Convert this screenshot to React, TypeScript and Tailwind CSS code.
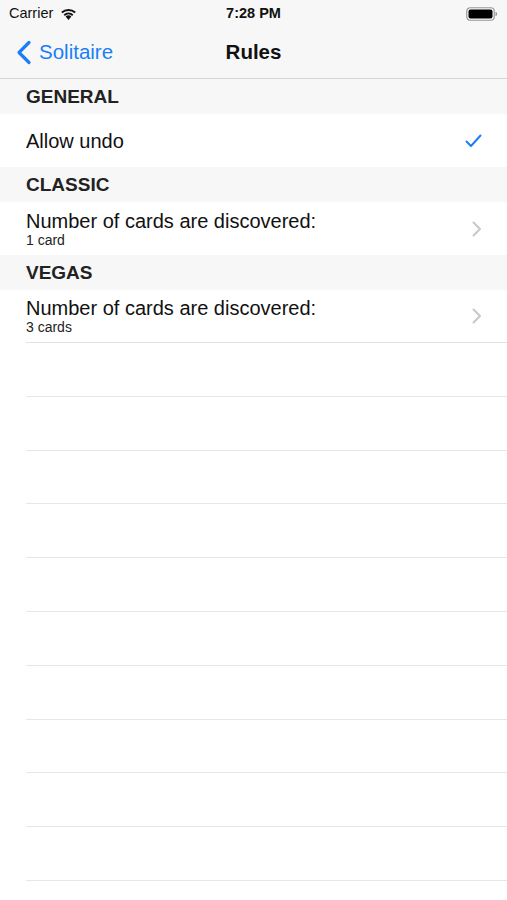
import React from 'react'

const font = { fontFamily: '"Liberation Sans", Arial, sans-serif' }

function Wifi() {
  return (
    <svg width="17" height="12" viewBox="0 0 17 12">
      <path d="M8.5 12 L5.6 8.6 A4.4 4.4 0 0 1 11.4 8.6 Z" fill="#111" />
      <path d="M3.6 6.4 A7.3 7.3 0 0 1 13.4 6.4 L12.1 7.9 A5.4 5.4 0 0 0 4.9 7.9 Z" fill="#111" />
      <path d="M1.2 3.8 A10.8 10.8 0 0 1 15.8 3.8 L14.5 5.3 A8.8 8.8 0 0 0 2.5 5.3 Z" fill="#111" />
    </svg>
  )
}

function Battery() {
  return (
    <svg width="32" height="14" viewBox="0 0 32 14">
      <rect x="0.75" y="0.75" width="27.5" height="12.5" rx="3.5" fill="none" stroke="#999" strokeWidth="1.2" />
      <rect x="2.5" y="2.5" width="24" height="9" rx="2" fill="#000" />
      <path d="M29.5 4.8 Q31.2 5.2 31.2 7 Q31.2 8.8 29.5 9.2 Z" fill="#999" />
    </svg>
  )
}

function Section({ title }: { title: string }) {
  return (
    <div className="h-[35px] bg-[#f7f7f7] flex items-center pl-[26px] pt-[2px]">
      <span className="text-[19px] font-semibold text-[#222]">{title}</span>
    </div>
  )
}

function Chevron() {
  return (
    <svg width="10" height="16" viewBox="0 0 10 16">
      <path d="M1.5 1.5 L8 8 L1.5 14.5" fill="none" stroke="#c7c7cc" strokeWidth="2" strokeLinecap="round" strokeLinejoin="round" />
    </svg>
  )
}

function DetailRow({ title, value, last }: { title: string; value: string; last?: boolean }) {
  return (
    <div className="bg-white pl-[26px]">
      <div className={`h-[53px] flex items-center pr-[25px] ${last ? 'border-b border-[#e0e0e0]' : ''}`}>
        <div className="flex-1 flex flex-col">
          <span className="text-[20px] leading-[22px] text-[#111]">{title}</span>
          <span className="text-[14px] leading-[16px] text-[#222]">{value}</span>
        </div>
        <Chevron />
      </div>
    </div>
  )
}

export default function App() {
  const empties = Array.from({ length: 10 })
  return (
    <div className="w-[507px] h-[900px] bg-white overflow-hidden" style={font}>
      <div className="bg-[#f7f7f7] border-b border-[#d6d6d6]">
        <div className="h-[27px] flex items-center justify-between px-[9px] relative">
          <div className="flex items-center gap-[7px]">
            <span className="text-[14.5px] text-[#111]">Carrier</span>
            <Wifi />
          </div>
          <span className="absolute left-0 right-0 text-center text-[14.5px] font-semibold text-[#111]">7:28 PM</span>
          <Battery />
        </div>
        <div className="h-[51px] flex items-center relative">
          <div className="flex items-center pl-[16px] gap-[7px] text-[#1a7ff5]">
            <svg width="16" height="25" viewBox="0 0 16 25">
              <path d="M13 2.5 L3 12.5 L13 22.5" fill="none" stroke="#1a7ff5" strokeWidth="3.2" strokeLinecap="round" strokeLinejoin="round" />
            </svg>
            <span className="text-[20.5px]">Solitaire</span>
          </div>
          <span className="absolute left-0 right-0 text-center text-[20.5px] font-semibold text-[#111] pointer-events-none">Rules</span>
        </div>
      </div>
      <Section title="GENERAL" />
      <div className="h-[53px] bg-white flex items-center pl-[26px] pr-[25px]">
        <span className="flex-1 text-[20px] text-[#111]">Allow undo</span>
        <svg width="17" height="14" viewBox="0 0 17 14">
          <path d="M1.5 7.5 L6 12 L15.5 1.5" fill="none" stroke="#1a7ff5" strokeWidth="2" strokeLinecap="round" strokeLinejoin="round" />
        </svg>
      </div>
      <Section title="CLASSIC" />
      <DetailRow title="Number of cards are discovered:" value="1 card" />
      <Section title="VEGAS" />
      <DetailRow title="Number of cards are discovered:" value="3 cards" last />
      <div className="pl-[26px]">
        {empties.map((_, i) => (
          <div key={i} className="h-[53.8px] border-b border-[#e6e6e6]" />
        ))}
      </div>
    </div>
  )
}
